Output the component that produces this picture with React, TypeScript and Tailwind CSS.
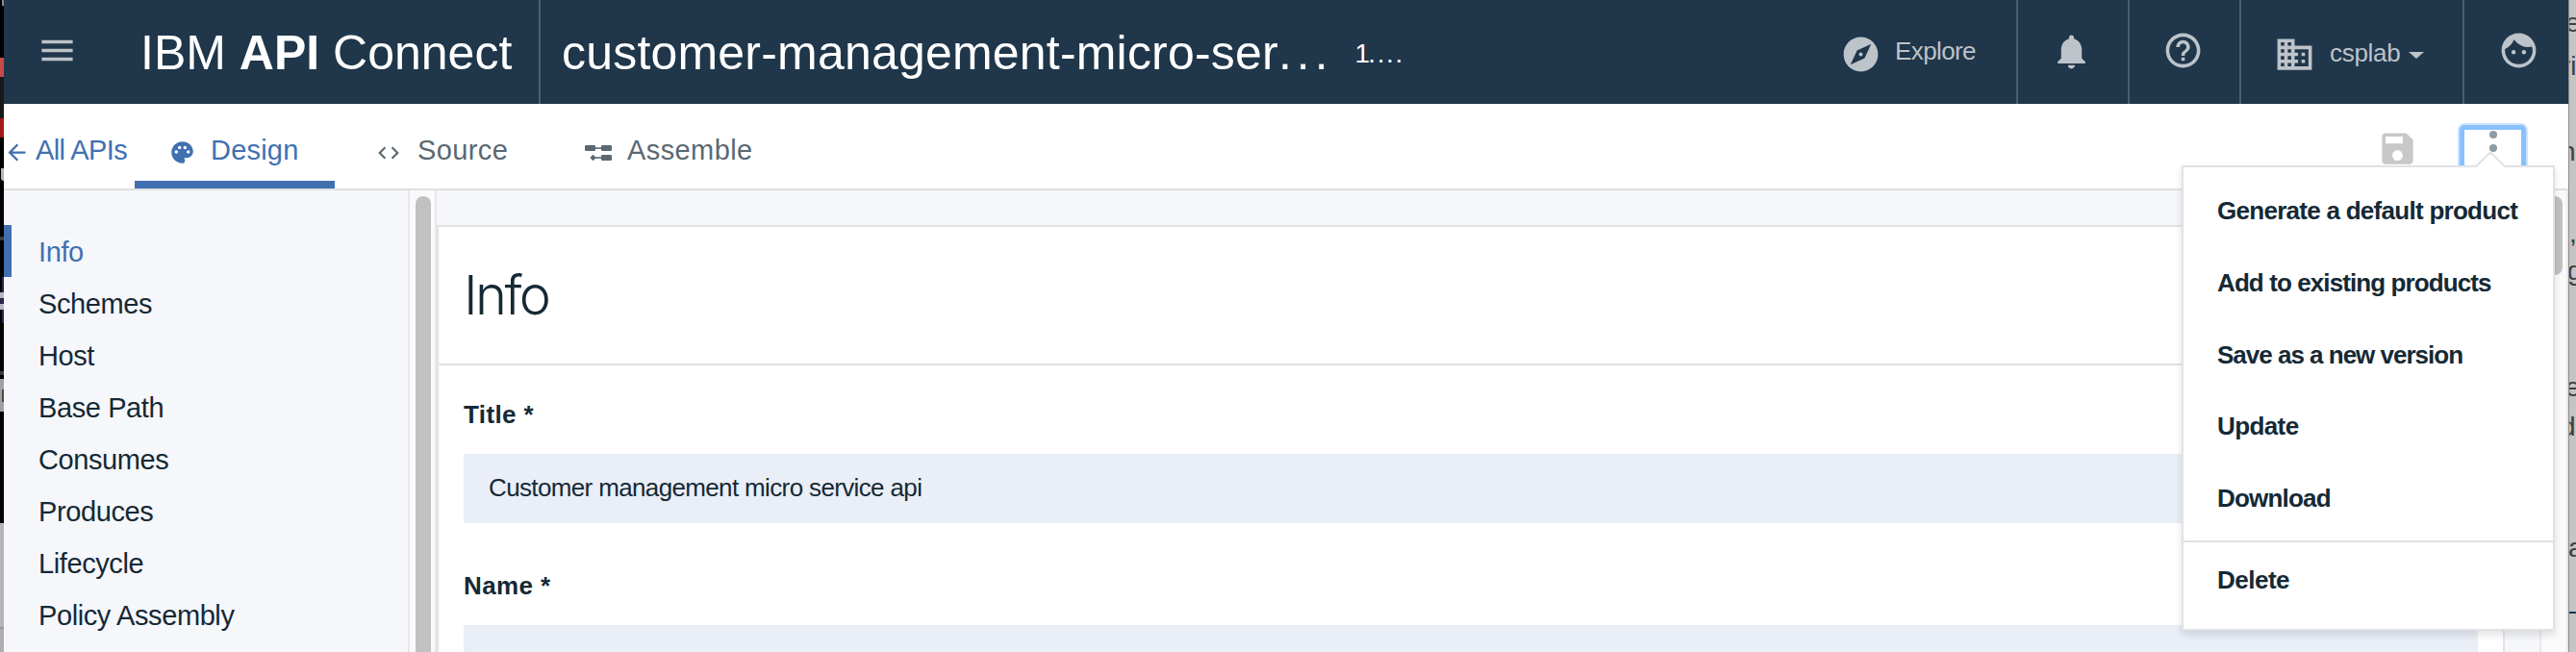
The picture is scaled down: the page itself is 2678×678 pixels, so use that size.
import {
  MdMenu, MdExplore, MdNotifications, MdHelpOutline, MdBusiness, MdFace, MdSave, MdPalette, MdCode, MdArrowBack,
} from "react-icons/md";

const sidebar = ["Info", "Schemes", "Host", "Base Path", "Consumes", "Produces", "Lifecycle", "Policy Assembly"];
const actions = [
  { label: "Generate a default product", style: "h-[75px] tracking-[-0.72px]" },
  { label: "Add to existing products", style: "h-[76px] tracking-[-0.9px]" },
  { label: "Save as a new version", style: "h-[73px] tracking-[-1px]" },
  { label: "Update", style: "h-[75px] tracking-[-0.6px]" },
  { label: "Download", style: "h-[76px] tracking-[-0.8px]" },
];

function AssembleIcon() {
  return (
    <svg width="28" height="17" viewBox="0 0 28 17" fill="currentColor" className="mt-[7px] shrink-0">
      <rect x="0" y="0" width="11" height="6" rx="1.2" />
      <rect x="17" y="0" width="11" height="6" rx="1.2" />
      <rect x="10" y="2.3" width="8" height="1.6" />
      <rect x="17" y="10" width="11" height="6" rx="1.2" />
      <rect x="8" y="12.2" width="10" height="1.6" />
      <path d="M8.5 9.8l3.2 3.2-3.2 3.2-3.2-3.2z" />
    </svg>
  );
}

function LeftWindow() {
  return (
    <div className="flex w-1 shrink-0 flex-col overflow-hidden bg-black">
      <div className="h-1.5 w-0.5 self-end bg-[#8a8a8a]" />
      <div className="mt-[54px] h-5 bg-[#c74a4a]" />
      <div className="h-[43px] bg-[#181818]" />
      <div className="h-5 bg-[#a5161a]" />
      <div className="mt-8 h-[13px] w-[3px] self-end rounded-bl bg-[#b5b5b5]" />
      <div className="mt-[58px] h-1 bg-[#3c3c3c]" />
      <div className="mt-[38px] h-4 w-0.5 self-end bg-[#2c2352]" />
      <div className="h-1.5 bg-[#b8b6c4]" />
      <div className="h-1.5 bg-[#2c2352]" />
      <div className="h-1.5 bg-[#b8b6c4]" />
      <div className="h-[14px] w-0.5 self-end bg-[#2c2352]" />
      <div className="mt-[50px] h-1 bg-[#3c3c3c]" />
      <div className="mt-1 flex h-[34px] flex-col items-end justify-center bg-[#a3a19f]">
        <div className="h-[13px] w-0.5 bg-[#4a4a4a]" />
      </div>
      <div className="h-[116px] shrink-0" />
      <div className="h-[108px] bg-[#b8b6b4]" />
      <div className="h-0.5 bg-[#9b9997]" />
      <div className="grow bg-[#b0aeac]" />
    </div>
  );
}

function RightWindow() {
  return (
    <div className="relative grow overflow-hidden border-l border-[#8c8c8c] bg-[#c4c4c4] text-[28px] leading-[28px] text-[#404040]">
      <span className="absolute top-[10px] -left-1">e</span>
      <span className="absolute top-[55px] -left-2">ri</span>
      <span className="absolute top-[144px] -left-[9px]">n</span>
      <span className="absolute top-[229px] -left-[14px]">s,</span>
      <span className="absolute top-[268px] -left-0.5">g</span>
      <span className="absolute top-[389px] -left-1">e</span>
      <span className="absolute top-[430px] -left-[9px]">d</span>
      <span className="absolute top-[556px] -left-px">a</span>
      <span className="absolute top-[636px] -left-1 h-0.5 w-4 bg-[#20364a]" />
    </div>
  );
}

function ActionsMenu() {
  return (
    <div className="absolute top-[172px] left-[2264px] flex h-[484px] w-[388px] flex-col border-2 border-[#dfe3e6] bg-white text-[26px] leading-none font-bold whitespace-nowrap shadow-[0_4px_8px_rgba(0,0,0,0.12)]">
      <svg width="32" height="18" viewBox="0 0 32 18" className="absolute -top-[17px] left-[303px]">
        <path d="M0 18L16 2l16 16z" fill="#fff" />
        <path d="M1 16L16 1.5 31 16" fill="none" stroke="#dfe3e6" strokeWidth="2" />
      </svg>
      <div className="h-[388px] shrink-0 pt-[7px]">
        {actions.map((a) => (
          <div key={a.label} className={"flex items-center pl-[35px] " + a.style}>{a.label}</div>
        ))}
      </div>
      <div className="flex h-[80px] items-center border-t-2 border-[#dfe3e6] pl-[35px] tracking-[-0.5px]">Delete</div>
    </div>
  );
}

export default function App() {
  return (
    <div className="flex h-[678px] w-[2678px] overflow-hidden bg-[#c4c4c4] font-['Liberation_Sans',sans-serif] text-[#152935]">
      <LeftWindow />
      <div className="relative flex w-[2666px] shrink-0 flex-col bg-white">
        <header className="flex h-[108px] shrink-0 bg-[#20364a] text-white">
          <div className="flex w-[558px] shrink-0 items-center border-r-2 border-[#4d5e6e] pl-[34px]">
            <MdMenu className="-mt-1 size-[43px] shrink-0 text-[#bcc3c9]" />
            <div className="mt-px ml-[65px] text-[50px] leading-none whitespace-nowrap">IBM <b>API</b> Connect</div>
          </div>
          <div className="flex grow items-center pl-[22px] whitespace-nowrap">
            <span className="mt-px text-[50px] leading-none tracking-[0.2px]">customer-management-micro-ser<span className="tracking-[5px]">...</span></span>
            <span className="mt-1 ml-[23px] text-[28px] leading-none"><span className="tracking-[-2px]">1</span><span className="tracking-[1.7px]">....</span></span>
          </div>
          <div className="flex w-[186px] shrink-0 items-center pl-[3px] text-[#bcc3c9]">
            <MdExplore className="mt-1 size-[43px]" />
            <span className="mb-[2px] ml-3.5 text-[26px] leading-none tracking-[-0.6px]">Explore</span>
          </div>
          <div className="flex w-[116px] shrink-0 items-center justify-center border-l-2 border-[#4d5e6e] pr-1 text-[#bcc3c9]"><MdNotifications className="-mt-0.5 size-[43px]" /></div>
          <div className="flex w-[116px] shrink-0 items-center justify-center border-l-2 border-[#4d5e6e] pr-[3px] text-[#bcc3c9]"><MdHelpOutline className="-mt-[3px] size-[43px]" /></div>
          <div className="flex w-[232px] shrink-0 items-center border-l-2 border-[#4d5e6e] pl-[34px] text-[#bcc3c9]">
            <MdBusiness className="mt-1 size-[43px]" />
            <span className="mt-0.5 ml-[15px] text-[26px] leading-none tracking-[-0.3px]">csplab</span>
            <span className="mt-1.5 ml-[9px] border-x-8 border-t-[7px] border-x-transparent border-t-[#bcc3c9]" />
          </div>
          <div className="flex w-[110px] shrink-0 items-center justify-center border-l-2 border-[#4d5e6e] pl-1 text-[#bcc3c9]"><MdFace className="-mt-[3px] size-[43px]" /></div>
        </header>
        <nav className="flex h-[90px] shrink-0 items-stretch border-b-2 border-[#dfe0e1] text-[29px] leading-none text-[#5a6872]">
          <div className="flex w-[136px] items-center pt-2 text-[#4170b0]">
            <MdArrowBack className="mt-[5px] size-[27px] shrink-0" />
            <span className="ml-[6px] tracking-[-0.6px] whitespace-nowrap">All APIs</span>
          </div>
          <div className="flex w-[208px] items-center border-b-8 border-[#4170b0] pt-4 pl-[36px] text-[#4170b0]">
            <MdPalette className="mt-[5px] size-[27px]" />
            <span className="ml-[16px] tracking-[0.2px]">Design</span>
          </div>
          <div className="flex w-[260px] items-center pt-2 pl-[43px]">
            <MdCode className="mt-[5px] size-[26px]" />
            <span className="ml-[17px] tracking-[0.4px]">Source</span>
          </div>
          <div className="flex grow items-center pt-2">
            <AssembleIcon />
            <span className="ml-4 tracking-[0.4px]">Assemble</span>
          </div>
          <MdSave className="mt-[25px] size-[43px] text-[#c8c8c8]" />
          <button className="mt-5 mr-[42px] ml-[41px] flex h-16 w-[73px] items-stretch rounded-lg border-2 border-[#c9e3fe]">
            <span className="flex grow flex-col items-center gap-1.5 rounded-[5px] border-[5px] border-[#89c0fd] pt-px">
              <span className="size-2 rounded-full bg-[#8c9ba5]" />
              <span className="size-2 rounded-full bg-[#8c9ba5]" />
              <span className="size-2 rounded-full bg-[#8c9ba5]" />
            </span>
          </button>
        </nav>
        <div className="flex min-h-0 grow bg-[#f5f7fb]">
          <aside className="w-[420px] shrink-0 pt-9">
            {sidebar.map((s, i) => (
              <div key={s} className={"flex h-[54px] items-center pt-[3px] text-[29px] leading-none tracking-[-0.4px] " + (i === 0 ? "border-l-8 border-[#4170b0] pl-7 text-[#4170b0]" : "pl-9")}>{s}</div>
            ))}
          </aside>
          <div className="flex w-[30px] shrink-0 justify-center border-x-2 border-[#e8e8e8] bg-[#fafafa] pt-1.5 pl-0.5">
            <div className="h-[600px] w-4 rounded-full bg-[#c1c1c1]" />
          </div>
          <main className="grow overflow-hidden pt-9">
            <div className="h-[600px] w-[2150px] border-2 border-[#dfe3e6] bg-white">
              <h1 className="flex h-[144px] items-center border-b-2 border-[#dfe3e6] pl-[26px] font-['Inter'] text-[56px] leading-none font-light tracking-[-2.6px]">Info</h1>
              <div className="px-[26px]">
                <div className="flex h-[92px] items-center pt-[10px] text-[26px] leading-none font-bold tracking-[0.4px]">Title *</div>
                <div className="flex h-[72px] items-center bg-[#e9eef7] pb-0.5 pl-[26px] text-[26px] leading-none tracking-[-0.64px]">Customer management micro service api</div>
                <div className="flex h-[106px] items-center pt-6 text-[26px] leading-none font-bold tracking-[0.4px]">Name *</div>
                <div className="h-[72px] bg-[#e9eef7]" />
              </div>
            </div>
          </main>
          <div className="flex w-[30px] shrink-0 justify-center border-x-2 border-[#e8e8e8] bg-[#fafafa] pt-1.5 pl-0.5">
            <div className="h-[82px] w-4 rounded-full bg-[#c1c1c1]" />
          </div>
        </div>
        <ActionsMenu />
      </div>
      <RightWindow />
    </div>
  );
}
